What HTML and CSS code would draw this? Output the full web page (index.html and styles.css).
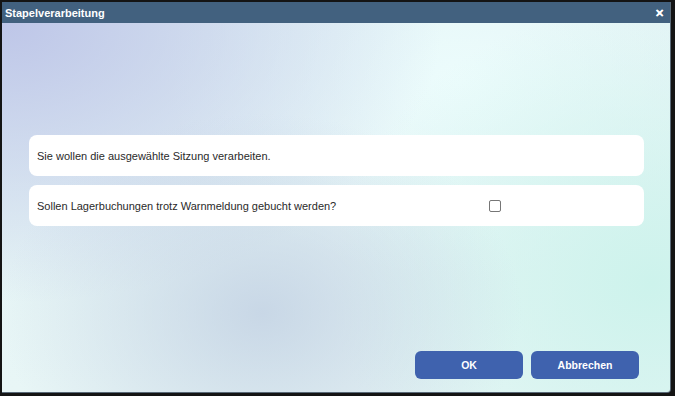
FILE: index.html
```html
<!DOCTYPE html>
<html lang="de">
<head>
<meta charset="utf-8">
<title>Stapelverarbeitung</title>
<link rel="stylesheet" href="styles.css">
</head>
<body>
<div class="dialog">
  <div class="titlebar">
    <span class="title">Stapelverarbeitung</span>
    <span class="close">✕</span>
  </div>
  <div class="content">
    <div class="cards">
      <div class="card">Sie wollen die ausgewählte Sitzung verarbeiten.</div>
      <div class="card card-check">
        <span class="label">Sollen Lagerbuchungen trotz Warnmeldung gebucht werden?</span>
        <span class="checkbox"></span>
      </div>
    </div>
    <div class="actions">
      <button class="btn">OK</button>
      <button class="btn">Abbrechen</button>
    </div>
  </div>
</div>
</body>
</html>
```

FILE: styles.css
```css
html, body {
  margin: 0;
  padding: 0;
  height: 100%;
}
body {
  background: #141414;
  font-family: "Liberation Sans", Arial, sans-serif;
}
.dialog {
  box-sizing: border-box;
  margin: 2px 4px 0 2px;
  height: calc(100% - 5px);
  display: flex;
  flex-direction: column;
  border-right: 1px solid #5a6a78;
  border-bottom: 1px solid #5a6a78;
  border-bottom-right-radius: 4px;
  overflow: hidden;
}
.titlebar {
  height: 21px;
  background: #42617f;
  color: #fff;
  display: flex;
  align-items: center;
  justify-content: space-between;
  padding: 0 6px 0 3px;
  flex: none;
}
.title {
  font-weight: bold;
  font-size: 11px;
}
.close {
  font-weight: bold;
  font-size: 11px;
  margin-top: 2px;
  text-shadow: 0 0 0.6px #fff;
}
.content {
  flex: 1;
  display: flex;
  flex-direction: column;
  padding: 112px 26px 13px 27px;
  background:
    radial-gradient(ellipse 260px 200px at 260px 290px, rgba(190, 205, 225, 0.75), rgba(190, 205, 225, 0) 100%),
    radial-gradient(ellipse 440px 280px at 0px 0px, rgba(190, 198, 232, 1), rgba(190, 198, 232, 0) 100%),
    radial-gradient(ellipse 320px 280px at 650px 260px, rgba(205, 243, 236, 1), rgba(205, 243, 236, 0) 100%),
    radial-gradient(ellipse 300px 200px at 460px 60px, rgba(236, 252, 252, 1), rgba(236, 252, 252, 0) 100%),
    linear-gradient(180deg, #e2f2f4 0%, #e8f6f6 100%);
}
.cards {
  display: flex;
  flex-direction: column;
  gap: 9px;
}
.card {
  background: #fff;
  border-radius: 8px;
  height: 41px;
  display: flex;
  align-items: center;
  padding: 0 8px;
  font-size: 11px;
  color: #2a2a2a;
}
.label {
  width: 452px;
}
.checkbox {
  width: 10px;
  height: 10px;
  border: 1px solid #767676;
  border-radius: 2px;
  background: #fff;
}
.actions {
  margin-top: auto;
  display: flex;
  justify-content: flex-end;
  gap: 8px;
  padding-right: 5px;
}
.btn {
  width: 108px;
  height: 28px;
  border: none;
  border-radius: 6px;
  background: #3f62ae;
  color: #fff;
  font-family: "Liberation Sans", Arial, sans-serif;
  font-weight: bold;
  font-size: 10.5px;
  padding: 0;
}
```
